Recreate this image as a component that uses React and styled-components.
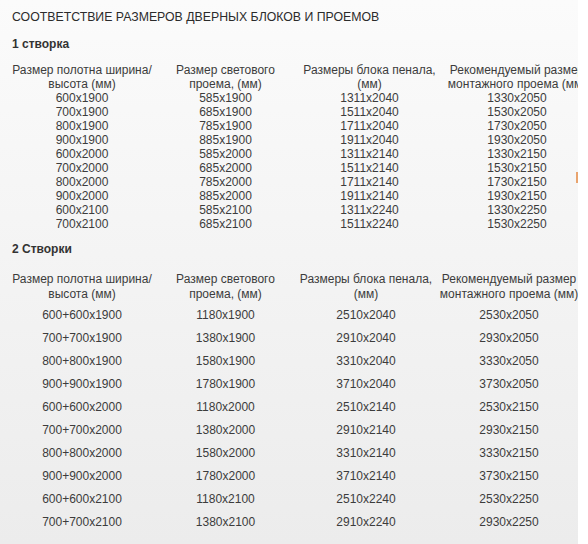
import styled, { createGlobalStyle } from "styled-components";

const GlobalStyle = createGlobalStyle`
    body {
        margin: 0;
        background: #fff;
        font-family: "Liberation Sans", Arial, sans-serif;
        color: #333;
    }
`;

const Panel = styled.div`
    position: relative;
    width: 566px;
    height: 535px;
    padding: 9px 0 0 12px;
    overflow: hidden;
    background: linear-gradient(#fbfbfb, #ececec);
`;

const Title = styled.h1`
    margin: 0;
    font-size: 12.3px;
    line-height: 16px;
    font-weight: normal;
    color: #2b2b2b;
`;

const Section = styled.h2`
    margin: ${(p) => p.$top}px 0 0;
    font-size: 12px;
    line-height: 16px;
    font-weight: bold;
    color: #333;
`;

const Table = styled.div`
    display: grid;
    grid-template-columns: ${(p) => p.$cols};
    margin: ${(p) => p.$top}px 0 0 -2px;
    font-size: 12px;
    color: #3c3c3c;
    white-space: nowrap;
`;

const Cell = styled.div`
    text-align: center;
    line-height: ${(p) => (p.$spaced ? "15px" : "14px")};
    padding: ${(p) => (p.$spaced ? (p.$head ? "2px 0" : "4px 0") : "0")};
`;

const Marker = styled.div`
    position: absolute;
    right: 0;
    top: 172px;
    width: 2px;
    height: 11px;
    background: #e9a46e;
`;

const headers = [
    ["Размер полотна ширина/", "высота (мм)"],
    ["Размер светового", "проема, (мм)"],
    ["Размеры блока пенала,", "(мм)"],
    ["Рекомендуемый размер", "монтажного проема (мм)"],
];

const single = [
    ["600x1900", "585x1900", "1311x2040", "1330x2050"],
    ["700x1900", "685x1900", "1511x2040", "1530x2050"],
    ["800x1900", "785x1900", "1711x2040", "1730x2050"],
    ["900x1900", "885x1900", "1911x2040", "1930x2050"],
    ["600x2000", "585x2000", "1311x2140", "1330x2150"],
    ["700x2000", "685x2000", "1511x2140", "1530x2150"],
    ["800x2000", "785x2000", "1711x2140", "1730x2150"],
    ["900x2000", "885x2000", "1911x2140", "1930x2150"],
    ["600x2100", "585x2100", "1311x2240", "1330x2250"],
    ["700x2100", "685x2100", "1511x2240", "1530x2250"],
];

const double = [
    ["600+600x1900", "1180x1900", "2510x2040", "2530x2050"],
    ["700+700x1900", "1380x1900", "2910x2040", "2930x2050"],
    ["800+800x1900", "1580x1900", "3310x2040", "3330x2050"],
    ["900+900x1900", "1780x1900", "3710x2040", "3730x2050"],
    ["600+600x2000", "1180x2000", "2510x2140", "2530x2150"],
    ["700+700x2000", "1380x2000", "2910x2140", "2930x2150"],
    ["800+800x2000", "1580x2000", "3310x2140", "3330x2150"],
    ["900+900x2000", "1780x2000", "3710x2140", "3730x2150"],
    ["600+600x2100", "1180x2100", "2510x2240", "2530x2250"],
    ["700+700x2100", "1380x2100", "2910x2240", "2930x2250"],
];

function SizeTable({ rows, cols, top, spaced }) {
    return (
        <Table $cols={cols} $top={top}>
            {headers.map((h, i) => (
                <Cell key={"h" + i} $head $spaced={spaced}>
                    {h[0]}
                    <br />
                    {h[1]}
                </Cell>
            ))}
            {rows.map((row, r) =>
                row.map((v, c) => (
                    <Cell key={r + "-" + c} $spaced={spaced}>
                        {v}
                    </Cell>
                ))
            )}
        </Table>
    );
}

export default function App() {
    return (
        <>
            <GlobalStyle />
            <Panel>
                <Title>СООТВЕТСТВИЕ РАЗМЕРОВ ДВЕРНЫХ БЛОКОВ И ПРОЕМОВ</Title>
                <Section $top={11}>1 створка</Section>
                <SizeTable rows={single} cols="144px 143px 145px 150px" top={11} />
                <Section $top={10}>2 Створки</Section>
                <SizeTable rows={double} cols="144px 143px 138px 148px" top={13} spaced />
                <Marker />
            </Panel>
        </>
    );
}
